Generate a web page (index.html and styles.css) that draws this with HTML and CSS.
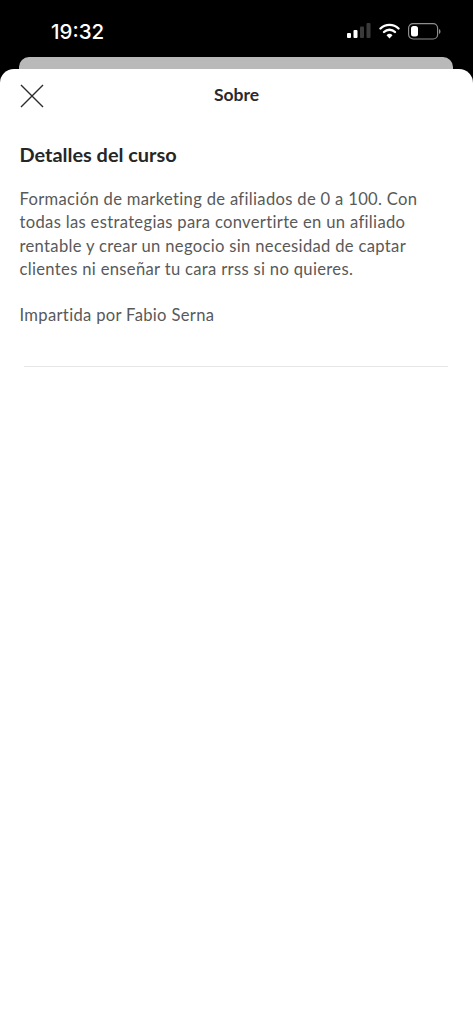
FILE: index.html
```html
<!DOCTYPE html>
<html lang="es">
<head>
<meta charset="utf-8">
<title>Sobre</title>
<link rel="stylesheet" href="styles.css">
</head>
<body>
<div class="phone">
  <div class="status">
    <span class="time">19:32</span>
    <div class="status-icons">
      <svg class="signal" width="24" height="16" viewBox="0 0 24 16">
        <rect x="0" y="10" width="4" height="5" rx="1" fill="#fff"/>
        <rect x="6.5" y="7" width="4" height="8" rx="1" fill="#fff"/>
        <rect x="13" y="3.500" width="4" height="11.500" rx="1" fill="#3a3a3a"/>
        <rect x="19.500" y="0" width="4" height="15" rx="1" fill="#3a3a3a"/>
      </svg>
      <svg class="wifi" width="21" height="16" viewBox="0 0 21 16">
        <path d="M1.500 5.500a13 13 0 0 1 18 0" fill="none" stroke="#fff" stroke-width="2.400" stroke-linecap="round"/>
        <path d="M5 9a8 8 0 0 1 11 0" fill="none" stroke="#fff" stroke-width="2.400" stroke-linecap="round"/>
        <path d="M10.500 15.500l-3-3.200a4.300 4.300 0 0 1 6 0z" fill="#fff"/>
      </svg>
      <svg class="battery" width="33" height="17" viewBox="0 0 33 17">
        <rect x="0.600" y="0.600" width="29" height="15.400" rx="4.500" fill="none" stroke="#8e8e8e" stroke-width="1.200"/>
        <rect x="3" y="3" width="7" height="10.600" rx="2.500" fill="#fff"/>
        <path d="M31 6v5a2.500 2.500 0 0 0 1.500-2.500A2.500 2.500 0 0 0 31 6z" fill="#8e8e8e"/>
      </svg>
    </div>
  </div>
  <div class="back-card"></div>
  <main class="sheet">
    <header class="sheet-header">
      <svg class="close" width="24" height="24" viewBox="0 0 24 24">
        <path d="M1 1l22 22M23 1L1 23" stroke="#2b2b2b" stroke-width="1.400" fill="none"/>
      </svg>
      <h1 class="sheet-title">Sobre</h1>
    </header>
    <section class="details">
      <h2 class="details-title">Detalles del curso</h2>
      <p class="details-text">Formación de marketing de afiliados de 0 a 100. Con<br>todas las estrategias para convertirte en un afiliado<br>rentable y crear un negocio sin necesidad de captar<br>clientes ni enseñar tu cara rrss si no quieres.</p>
      <p class="details-text">Impartida por Fabio Serna</p>
    </section>
    <hr class="divider">
  </main>
</div>
</body>
</html>
```
FILE: styles.css
```css
html, body {
  margin: 0;
  padding: 0;
  background: #000;
}
.phone {
  width: 473px;
  height: 1024px;
  display: flex;
  flex-direction: column;
  overflow: hidden;
  font-family: "Lato", "Noto Sans", sans-serif;
  background: #000;
}
.status {
  height: 57px;
  flex: none;
  display: flex;
  justify-content: space-between;
  align-items: center;
  padding: 5px 32px 0 51px;
  box-sizing: border-box;
}
.time {
  color: #fff;
  font-family: "Inter", "Liberation Sans", sans-serif;
  font-size: 20.500px;
  font-weight: 500;
}
.status-icons {
  display: flex;
  align-items: center;
  gap: 8px;
}
.back-card {
  height: 12px;
  flex: none;
  margin: 0 20px 0 19px;
  background: #b9b9b9;
  border-radius: 10px 10px 0 0;
}
.sheet {
  flex: 1;
  background: #fff;
  border-radius: 14px 14px 0 0;
  display: flex;
  flex-direction: column;
}
.sheet-header {
  position: relative;
  height: 52px;
  padding-bottom: 2px;
  box-sizing: border-box;
  display: flex;
  align-items: center;
  justify-content: center;
}
.close {
  position: absolute;
  left: 20px;
  top: 15px;
}
.sheet-title {
  margin: 0;
  font-size: 17.500px;
  font-weight: 700;
  color: #2b2b2b;
}
.details {
  padding: 21px 19px 0 19.500px;
}
.details-title {
  margin: 0 0 22px;
  font-size: 19.900px;
  line-height: 24px;
  font-weight: 700;
  color: #262626;
}
.details-text {
  margin: 0 0 23px;
  font-size: 16.600px;
  line-height: 23.300px;
  color: #595959;
  letter-spacing: 0.320px;
  white-space: nowrap;
}
.divider {
  margin: 16px 25px 0 24px;
  border: 0;
  border-top: 1px solid #e6e6e6;
}
```
